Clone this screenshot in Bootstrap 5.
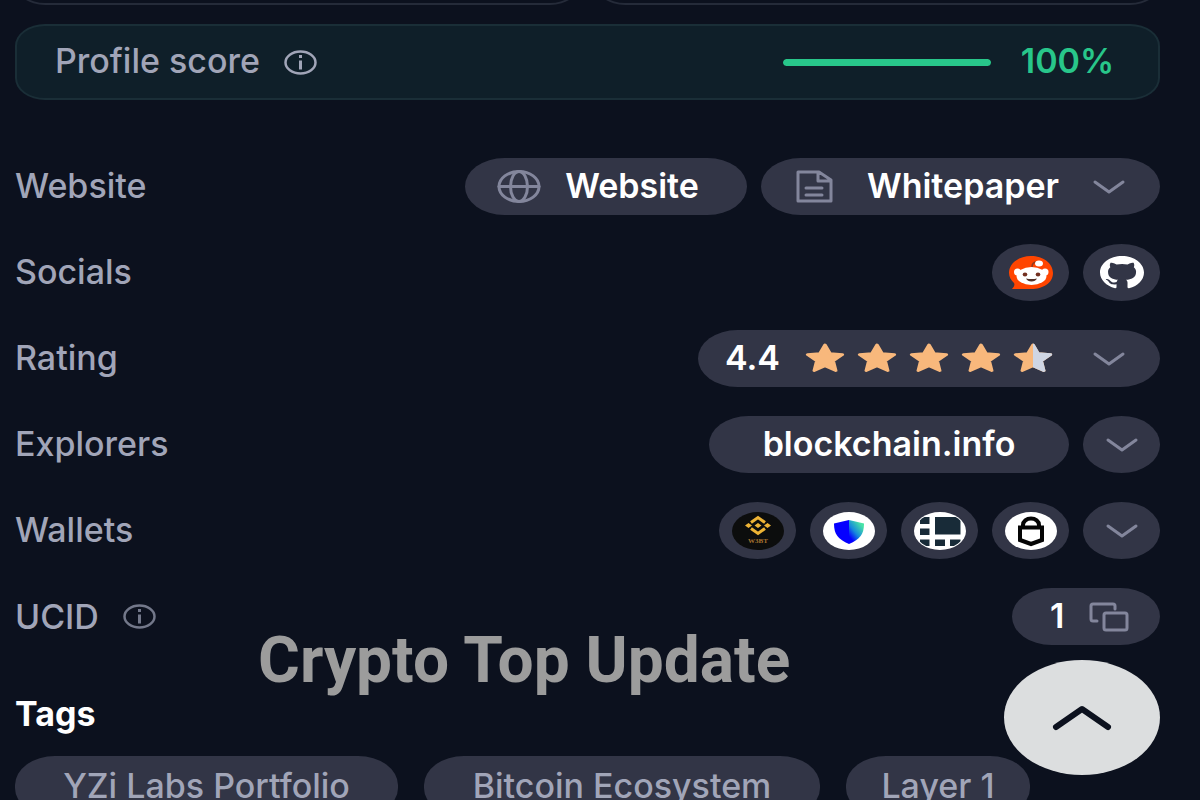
<!DOCTYPE html>
<html lang="en">
<head>
<meta charset="utf-8">
<meta name="viewport" content="width=device-width, initial-scale=1">
<title>Bitcoin profile</title>
<link href="https://cdn.jsdelivr.net/npm/bootstrap@5.3.0/dist/css/bootstrap.min.css" rel="stylesheet">
<style>
  :root { --page: #0c111e; --pill: #323546; --muted: #a1a5b8; --icon: #83869c; --good: #28c68a; }
  body { background: var(--page); color: var(--muted); font: 500 34px/40px Inter, "Liberation Sans", sans-serif; }
  .page { padding: 0 40px 0 15px; }
  .peek { height: 5px; gap: 15px; }
  .peek-card { height: 60px; border: 2px solid #252b39; border-radius: 30px / 22px; }
  .score { height: 76px; margin-top: 19px; padding: 0 38px; border: 2px solid #1a2e37; border-radius: 30px / 22px; background: #0f1f29; }
  .score-bar { width: 208px; height: 7px; background: #12372f; --bs-progress-bar-bg: var(--good); }
  .score-value { width: 105px; color: var(--good); font-weight: 600; }
  .details { margin-top: 58px; gap: 29px; }
  .pills { gap: 14px; }
  .pill { height: 57px; padding: 0 35px; border: 0; border-radius: 40px / 29px; background: var(--pill); color: #fff; text-decoration: none; display: flex; align-items: center; justify-content: center; font-weight: 600; white-space: nowrap; }
  .pill:hover { background: #3c4054; color: #fff; }
  .pill span, .details > div > span, .score span { padding-bottom: 2px; }
  .round { width: 77px; padding: 0; }
  .pill-site { width: 282px; gap: 8px; padding: 0 32px; }
  .pill-paper { width: 399px; }
  .pill-rating { width: 462px; padding-left: 27px; }
  .pill-explorer { width: 360px; }
  .pill-id { width: 148px; padding: 0 31px 0 38px; }
  .stars { gap: 12px; color: #f8b87c; }
  svg { display: block; flex: none; }
  .line { fill: none; stroke: var(--icon); stroke-width: 2; stroke-linecap: round; stroke-linejoin: round; }
  .thick { stroke-width: 3; }
  .tags-title { margin: 49px 0 0; color: #fff; font-size: 34px; line-height: 40px; font-weight: 700; }
  .tags { margin-top: 22px; gap: 26px; }
  .pill-tag { height: 61px; color: var(--muted); font-weight: 500; padding: 0; }
  .tag-a { width: 383px; } .tag-b { width: 396px; } .tag-c { width: 184px; }
  .to-top { position: fixed; right: 40px; bottom: 25px; width: 156px; height: 115px; border: 0; border-radius: 50%; background: #dcdedf; }
  .watermark { position: absolute; left: 258px; top: 621px; font: 700 64px/80px Roboto, sans-serif; color: #9c9c9c; white-space: nowrap; pointer-events: none; }
</style>
</head>
<body class="vh-100 overflow-hidden position-relative">
<svg width="0" height="0" class="position-absolute" aria-hidden="true">
  <symbol id="chevron" viewBox="0 0 32 14" preserveAspectRatio="none"><path d="M2 2l14 10L30 2" fill="none" stroke="#83869c" stroke-width="3" stroke-linecap="round" stroke-linejoin="round"/></symbol>
  <symbol id="info" viewBox="0 0 33 25"><ellipse cx="16.500" cy="12.500" rx="15" ry="11" fill="none" stroke="currentColor" stroke-width="2.500"/><path d="M16.500 10.500v9M16.500 5v3" stroke="currentColor" stroke-width="3"/></symbol>
  <symbol id="star" viewBox="0 0 24 24" preserveAspectRatio="none"><path d="M12 1.500l3.100 6.900 7.400.8-5.500 5.100 1.500 7.800L12 18.300l-6.500 3.800L7 14.300 1.500 9.200l7.400-.8z" stroke-width="2" stroke-linejoin="round" fill="currentColor" stroke="currentColor"/></symbol>
</svg>
<main class="page">
  <div class="peek d-flex align-items-end overflow-hidden">
    <div class="peek-card flex-fill"></div>
    <div class="peek-card flex-fill"></div>
  </div>

  <section class="score d-flex align-items-center justify-content-between">
    <div class="d-flex align-items-center gap-4">
      <span>Profile score</span>
      <svg width="33" height="25"><use href="#info"/></svg>
    </div>
    <div class="d-flex align-items-center">
      <div class="progress score-bar me-4" role="progressbar" aria-label="Profile score" aria-valuenow="100" aria-valuemin="0" aria-valuemax="100"><div class="progress-bar w-100 rounded-pill"></div></div>
      <span class="score-value text-center">100%</span>
    </div>
  </section>

  <section class="details d-flex flex-column">
    <div class="d-flex align-items-center justify-content-between">
      <span>Website</span>
      <div class="pills d-flex">
        <a href="#" class="pill pill-site">
          <svg width="44" height="33" viewBox="0 0 44 33" class="line thick"><ellipse cx="22" cy="16.500" rx="20" ry="15"/><ellipse cx="22" cy="16.500" rx="8.500" ry="15"/><path d="M2 16.500h40"/></svg>
          <span class="flex-fill text-center">Website</span>
        </a>
        <button type="button" class="pill pill-paper">
          <svg width="37" height="33" viewBox="0 0 37 33" class="line thick"><path d="M2 2h21l12 8v21H2zM22 2v9h12M10 18h16M10 25h16"/></svg>
          <span class="flex-fill text-center">Whitepaper</span>
          <svg width="32" height="14"><use href="#chevron"/></svg>
        </button>
      </div>
    </div>

    <div class="d-flex align-items-center justify-content-between">
      <span>Socials</span>
      <div class="pills d-flex">
        <a href="#" class="pill round" aria-label="Reddit">
          <svg width="44" height="34" viewBox="0 0 44 34"><path d="M22 0C34 0 44 7 44 17S34 33 22 33H3c2-2 3-4 2-6C2 24 0 21 0 17 0 7 10 0 22 0z" fill="#ff4500"/><circle cx="8.500" cy="16" r="3.500" fill="#fff"/><circle cx="36" cy="16" r="3.500" fill="#fff"/><ellipse cx="22.500" cy="20" rx="15" ry="9" fill="#fff"/><path d="M23 11c0-3 2-5 5-5" stroke="#8c3a20" stroke-width="1.500" fill="none"/><ellipse cx="30" cy="7.500" rx="4" ry="3" fill="#fff"/><ellipse cx="16" cy="18.500" rx="2.300" ry="2" fill="#733020"/><ellipse cx="29" cy="18.500" rx="2.300" ry="2" fill="#733020"/><path d="M17 22.500q5.500 1 11 0-1.500 3-5.500 3t-5.500-3z" fill="#523028"/></svg>
        </a>
        <a href="#" class="pill round" aria-label="GitHub">
          <svg width="44" height="33" viewBox="0 0 16 16" preserveAspectRatio="none" fill="#fff"><path d="M8 0C3.580 0 0 3.580 0 8c0 3.540 2.290 6.530 5.470 7.590.4.070.55-.17.55-.38 0-.19-.01-.82-.01-1.490-2.010.37-2.530-.49-2.690-.94-.09-.23-.48-.94-.82-1.130-.28-.15-.68-.52-.01-.53.63-.01 1.080.58 1.230.82.72 1.210 1.870.87 2.330.66.07-.52.28-.87.51-1.070-1.780-.2-3.640-.89-3.640-3.950 0-.87.31-1.590.82-2.150-.08-.2-.36-1.020.08-2.120 0 0 .67-.21 2.200.82.64-.18 1.320-.27 2-.27s1.360.09 2 .27c1.530-1.040 2.200-.82 2.200-.82.44 1.100.16 1.920.08 2.120.51.56.82 1.270.82 2.150 0 3.070-1.870 3.750-3.650 3.950.29.25.54.73.54 1.480 0 1.070-.01 1.930-.01 2.200 0 .21.15.46.55.38A8.010 8.010 0 0 0 16 8c0-4.420-3.580-8-8-8z"/></svg>
        </a>
      </div>
    </div>

    <div class="d-flex align-items-center justify-content-between">
      <span>Rating</span>
      <button type="button" class="pill pill-rating">
        <span>4.4</span>
        <span class="stars d-flex ms-auto me-3">
          <svg width="40" height="30"><use href="#star"/></svg>
          <svg width="40" height="30"><use href="#star"/></svg>
          <svg width="40" height="30"><use href="#star"/></svg>
          <svg width="40" height="30"><use href="#star"/></svg>
          <svg width="40" height="30"><clipPath id="right-half"><path d="M20 0h20v30H20z"/></clipPath><use href="#star"/><g clip-path="url(#right-half)" color="#cfd6e4"><use href="#star"/></g></svg>
        </span>
        <svg width="32" height="14" class="ms-4"><use href="#chevron"/></svg>
      </button>
    </div>

    <div class="d-flex align-items-center justify-content-between">
      <span>Explorers</span>
      <div class="pills d-flex">
        <a href="#" class="pill pill-explorer"><span>blockchain.info</span></a>
        <button type="button" class="pill round" aria-label="More explorers"><svg width="32" height="14"><use href="#chevron"/></svg></button>
      </div>
    </div>

    <div class="d-flex align-items-center justify-content-between">
      <span>Wallets</span>
      <div class="pills d-flex">
        <a href="#" class="pill round" aria-label="W3BT wallet">
          <svg width="52" height="38" viewBox="0 0 52 38"><ellipse cx="26" cy="19" rx="26" ry="19" fill="#0c0d0d"/><g fill="none" stroke="#edb335" stroke-width="3"><path d="M19 10.500l7-5 7 5M19 16.500l7 5 7-5"/></g><path d="M26 11l3.500 2.500L26 16l-3.500-2.500zM16.500 11l3.500 2.500-3.500 2.500-3.500-2.500zM35.500 11l3.500 2.500-3.500 2.500-3.500-2.500z" fill="#edb335"/><text x="26" y="31" text-anchor="middle" font-family="Liberation Serif, serif" font-size="7" font-weight="700" fill="#a77430">W3BT</text></svg>
        </a>
        <a href="#" class="pill round" aria-label="Trust wallet">
          <svg width="52" height="38" viewBox="0 0 52 38"><defs><linearGradient id="shield" x1="0.200" y1="1" x2="1" y2="0"><stop offset=".1" stop-color="#0500ff"/><stop offset=".4" stop-color="#1689dc"/><stop offset=".8" stop-color="#48e3a6"/></linearGradient></defs><ellipse cx="26" cy="19" rx="26" ry="19" fill="#fff"/><path d="M26 8l-15 3.500c0 11 4 15.500 15 20.500z" fill="#0500ff"/><path d="M26 8l15 3.500c0 11-4 15.500-15 20.500z" fill="url(#shield)"/></svg>
        </a>
        <a href="#" class="pill round" aria-label="Block wallet">
          <svg width="52" height="38" viewBox="0 0 52 38"><clipPath id="disc"><ellipse cx="26" cy="19" rx="25" ry="18"/></clipPath><ellipse cx="26" cy="19" rx="26" ry="19" fill="#fff"/><path clip-path="url(#disc)" fill="#182b38" d="M6 5h9.500v7H6zM21 5h25.500v17.500H21zM6 16.500h9.500V23H6zM6 27.500h9.500V34H6zM21 27.500h10V34H21zM36 27.500h10.500V34H36z"/></svg>
        </a>
        <a href="#" class="pill round" aria-label="Trezor wallet">
          <svg width="52" height="38" viewBox="0 0 52 38"><ellipse cx="26" cy="19" rx="26" ry="19" fill="#fff"/><path d="M18 15v-2a8 6.500 0 0 1 16 0v2M15 15.500h22v12.500l-11 4-11-4z" fill="none" stroke="#050505" stroke-width="4"/></svg>
        </a>
        <button type="button" class="pill round" aria-label="More wallets"><svg width="32" height="14"><use href="#chevron"/></svg></button>
      </div>
    </div>

    <div class="d-flex align-items-center justify-content-between">
      <div class="d-flex align-items-center gap-4"><span>UCID</span><svg width="33" height="25" color="#73788a"><use href="#info"/></svg></div>
      <button type="button" class="pill pill-id justify-content-between">
        <span>1</span>
        <svg width="40" height="30" viewBox="0 0 40 30" class="line thick"><path d="M8 19H4q-2 0-2-2V4q0-2 2-2h20q2 0 2 2v3"/><rect x="15" y="11" width="23" height="17" rx="2"/></svg>
      </button>
    </div>
  </section>

  <h2 class="tags-title">Tags</h2>
  <div class="tags d-flex">
    <a href="#" class="pill pill-tag tag-a"><span>YZi Labs Portfolio</span></a>
    <a href="#" class="pill pill-tag tag-b"><span>Bitcoin Ecosystem</span></a>
    <a href="#" class="pill pill-tag tag-c"><span>Layer 1</span></a>
  </div>
</main>
<div class="watermark">Crypto Top Update</div>
<button type="button" class="to-top d-flex align-items-center justify-content-center" aria-label="Back to top">
  <svg width="60" height="26" viewBox="0 0 60 26"><path d="M4 22L30 4l26 18" fill="none" stroke="#0c111e" stroke-width="6" stroke-linecap="round" stroke-linejoin="round"/></svg>
</button>
<script src="https://cdn.jsdelivr.net/npm/bootstrap@5.3.0/dist/js/bootstrap.bundle.min.js"></script>
</body>
</html>
